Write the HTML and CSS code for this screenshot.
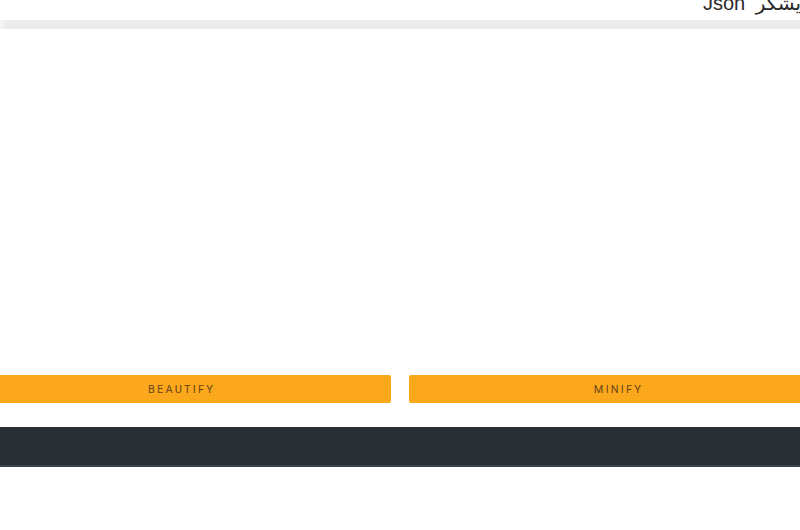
FILE: index.html
```html
<!DOCTYPE html>
<html lang="fa">
<head>
<meta charset="utf-8">
<title>ویرایشگر Json</title>
<link rel="stylesheet" href="styles.css">
</head>
<body>
<div class="page">
  <h1 class="title" dir="rtl">ویرایشگر Json</h1>
  <div class="toolbar"></div>
  <div class="editor"></div>
  <div class="actions">
    <button class="btn" type="button">BEAUTIFY</button>
    <button class="btn" type="button">MINIFY</button>
  </div>
  <footer class="footer"></footer>
</div>
</body>
</html>
```
FILE: styles.css
```css
html, body {
  margin: 0;
  padding: 0;
  background: #ffffff;
  overflow: hidden;
}
body {
  width: 800px;
  height: 530px;
  font-family: "Liberation Sans", "DejaVu Sans", Arial, sans-serif;
}
.page {
  margin: -7px -28px 0 -28px;
  display: flex;
  flex-direction: column;
}
.title {
  margin: 0 -5px 7px 0;
  font-size: 20px;
  line-height: 20px;
  font-weight: normal;
  color: #2a2a2a;
  text-align: right;
  word-spacing: 5px;
  font-family: "Liberation Sans", "DejaVu Sans", sans-serif;
}
.toolbar {
  height: 9px;
  background: #ececec;
  margin-left: 28px;
  border-left: 4px solid #f4f4f4;
}
.editor {
  height: 346px;
  background: #ffffff;
}
.actions {
  display: flex;
  gap: 18px;
  height: 28px;
}
.btn {
  flex: 1;
  border: none;
  border-radius: 2px;
  background: #fba81c;
  color: #6a461a;
  font-family: "Roboto", "Liberation Sans", sans-serif;
  font-size: 11px;
  letter-spacing: 2.2px;
  padding: 0;
  margin: 0;
  height: 28px;
}
.footer {
  margin-top: 24px;
  height: 38px;
  background: #283035;
  border-bottom: 2px solid #3a4349;
}
```
